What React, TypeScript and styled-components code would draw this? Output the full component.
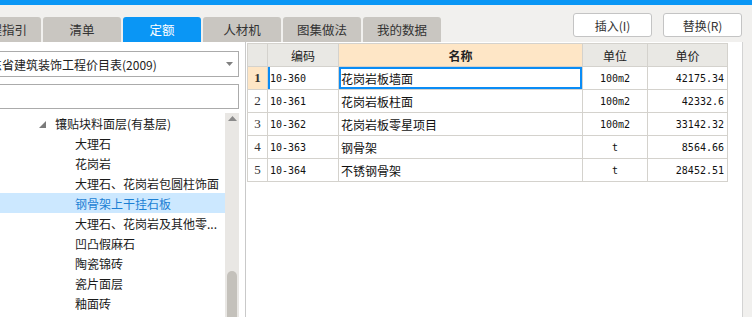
import React from "react";
import styled, { createGlobalStyle, css } from "styled-components";

const GlobalStyle = createGlobalStyle`
  html, body {
    margin: 0;
    padding: 0;
    background: #f1f0ee;
    font-family: "Noto Sans CJK SC", "Noto Sans", sans-serif;
    font-size: 12px;
    color: #222;
  }
  * { box-sizing: border-box; }
`;

const tabs = ["工程指引", "清单", "定额", "人材机", "图集做法", "我的数据"];

const treeItems: { label: string; level: number; open?: boolean; active?: boolean }[] = [
  { label: "镶贴块料面层(有基层)", level: 1, open: true },
  { label: "大理石", level: 2 },
  { label: "花岗岩", level: 2 },
  { label: "大理石、花岗岩包圆柱饰面", level: 2 },
  { label: "钢骨架上干挂石板", level: 2, active: true },
  { label: "大理石、花岗岩及其他零...", level: 2 },
  { label: "凹凸假麻石", level: 2 },
  { label: "陶瓷锦砖", level: 2 },
  { label: "瓷片面层", level: 2 },
  { label: "釉面砖", level: 2 },
];

const rows = [
  { code: "10-360", name: "花岗岩板墙面", unit: "100m2", price: "42175.34" },
  { code: "10-361", name: "花岗岩板柱面", unit: "100m2", price: "42332.6" },
  { code: "10-362", name: "花岗岩板零星项目", unit: "100m2", price: "33142.32" },
  { code: "10-363", name: "钢骨架", unit: "t", price: "8564.66" },
  { code: "10-364", name: "不锈钢骨架", unit: "t", price: "28452.51" },
];

export default function App() {
  return (
    <Page>
      <GlobalStyle />
      <TopStrip />
      <Header>
        <TabBar>
          {tabs.map((t) => (
            <Tab key={t} $active={t === "定额"}>
              {t}
            </Tab>
          ))}
        </TabBar>
        <Actions>
          <ActionButton>插入(I)</ActionButton>
          <ActionButton>替换(R)</ActionButton>
        </Actions>
      </Header>
      <Body>
        <LeftPanel>
          <Select>
            <span>广东省建筑装饰工程价目表(2009)</span>
            <svg width="7" height="4" viewBox="0 0 7 4">
              <path d="M0 0 H7 L3.5 4 Z" fill="#808080" />
            </svg>
          </Select>
          <SearchBox />
          <TreeArea>
            <TreeList>
              {treeItems.map((item) => (
                <TreeRow key={item.label} $level={item.level} $active={item.active}>
                  {item.open && (
                    <Toggle width="7" height="7" viewBox="0 0 7 7">
                      <path d="M7 0 V7 H0 Z" fill="#7b7b7b" />
                    </Toggle>
                  )}
                  {item.label}
                </TreeRow>
              ))}
            </TreeList>
            <ScrollTrack>
              <svg width="9" height="5" viewBox="0 0 9 5">
                <path d="M0 5 L4.5 0 L9 5 Z" fill="#8a8a8a" />
              </svg>
              <ScrollThumb />
            </ScrollTrack>
          </TreeArea>
        </LeftPanel>
        <RightPanel>
          <Grid>
            <colgroup>
              <col style={{ width: 20 }} />
              <col style={{ width: 71 }} />
              <col style={{ width: 244 }} />
              <col style={{ width: 65 }} />
              <col style={{ width: 80 }} />
            </colgroup>
            <thead>
              <tr>
                <HeadCell />
                <HeadCell>编码</HeadCell>
                <HeadCell $focus>名称</HeadCell>
                <HeadCell>单位</HeadCell>
                <HeadCell>单价</HeadCell>
              </tr>
            </thead>
            <tbody>
              {rows.map((r, i) => (
                <tr key={r.code}>
                  <RowNum $current={i === 0}>{i + 1}</RowNum>
                  <Cell $mono $marker={i === 0}>{r.code}</Cell>
                  <Cell $selected={i === 0}>{r.name}</Cell>
                  <Cell $mono $align="center">{r.unit}</Cell>
                  <Cell $mono $align="right">{r.price}</Cell>
                </tr>
              ))}
            </tbody>
          </Grid>
        </RightPanel>
      </Body>
    </Page>
  );
}

const Page = styled.div`
  width: 752px;
  height: 317px;
  overflow: hidden;
  display: flex;
  flex-direction: column;
`;

const TopStrip = styled.div`
  height: 5px;
  background: #0a96f5;
`;

const Header = styled.div`
  height: 37px;
  display: flex;
  justify-content: space-between;
`;

const TabBar = styled.div`
  display: flex;
  align-items: flex-end;
  gap: 2px;
  margin-left: -37px;
`;

const Tab = styled.div<{ $active?: boolean }>`
  width: 78px;
  height: 25px;
  border-radius: 3px 3px 0 0;
  background: #c9c6c1;
  color: #333;
  font-size: 12.5px;
  display: flex;
  align-items: center;
  justify-content: center;
  ${(p) =>
    p.$active &&
    css`
      background: #0a96f5;
      color: #fff;
    `}
`;

const Actions = styled.div`
  display: flex;
  gap: 11px;
  padding: 8px 10px 0 0;
`;

const ActionButton = styled.button`
  width: 79px;
  height: 24px;
  background: #fff;
  border: 1px solid #c4c4c4;
  border-radius: 3px;
  font-family: inherit;
  font-size: 12px;
  color: #333;
  padding: 0;
`;

const Body = styled.div`
  flex: 1;
  display: flex;
  min-height: 0;
`;

const LeftPanel = styled.div`
  width: 246px;
  background: #fff;
  border-right: 1px solid #c9c9c9;
  display: flex;
  flex-direction: column;
  padding: 9px 6px 0 0;
  overflow: hidden;
`;

const Select = styled.div`
  height: 26px;
  margin-left: -12px;
  border: 1px solid #ababab;
  display: flex;
  align-items: center;
  justify-content: space-between;
  padding: 0 5px 0 0;
  font-size: 12px;
  color: #222;
  white-space: nowrap;
  overflow: hidden;
  span {
    margin-left: -11px;
  }
`;

const SearchBox = styled.div`
  height: 25px;
  margin: 7px 0 0 -12px;
  border: 1px solid #ababab;
`;

const TreeArea = styled.div`
  flex: 1;
  display: flex;
  margin-top: 4px;
  min-height: 0;
`;

const TreeList = styled.div`
  flex: 1;
  display: flex;
  flex-direction: column;
`;

const TreeRow = styled.div<{ $level: number; $active?: boolean }>`
  height: 20px;
  flex: none;
  display: flex;
  align-items: center;
  padding-left: ${(p) => (p.$level === 1 ? 55 : 75)}px;
  position: relative;
  white-space: nowrap;
  color: ${(p) => (p.$active ? "#1b7fd4" : "#1a1a1a")};
  background: ${(p) => (p.$active ? "#cce8ff" : "transparent")};
`;

const Toggle = styled.svg`
  position: absolute;
  left: 39px;
  top: 8px;
`;

const ScrollTrack = styled.div`
  width: 14px;
  background: #e9e7e4;
  display: flex;
  flex-direction: column;
  align-items: center;
  padding-top: 3px;
`;

const ScrollThumb = styled.div`
  width: 10px;
  flex: 1;
  margin-top: 150px;
  background: #c4c1bb;
  border-radius: 5px 5px 0 0;
`;

const RightPanel = styled.div`
  flex: 1;
  background: #fff;
  border-right: 1px solid #d3d3d3;
  margin-right: 9px;
  padding: 1px 0 0 1px;
`;

const Grid = styled.table`
  border-collapse: collapse;
  table-layout: fixed;
  width: 481px;
  td, th {
    height: 23px;
    border: 1px solid #d4d2cd;
    padding: 0;
  }
`;

const HeadCell = styled.th<{ $focus?: boolean }>`
  background: ${(p) => (p.$focus ? "#fee6c6" : "#e9e8e4")};
  font-weight: ${(p) => (p.$focus ? 700 : 400)};
  font-size: 12px;
  color: #222;
  text-align: center;
`;

const RowNum = styled.td<{ $current?: boolean }>`
  text-align: center;
  font-family: "Liberation Serif", serif;
  font-size: 13px;
  color: #333;
  font-weight: ${(p) => (p.$current ? 700 : 400)};
  background: ${(p) => (p.$current ? "#fee6c6" : "#fff")};
`;

const Cell = styled.td<{
  $mono?: boolean;
  $align?: "left" | "center" | "right";
  $selected?: boolean;
  $marker?: boolean;
}>`
  text-align: ${(p) => p.$align || "left"};
  font-size: ${(p) => (p.$mono ? "10px" : "12px")};
  font-family: ${(p) =>
    p.$mono ? `"DejaVu Sans Mono", monospace` : `"Noto Sans CJK SC", sans-serif`};
  color: #111;
  padding: ${(p) => (p.$align === "right" ? "0 3px 0 2px" : "0 2px")} !important;
  white-space: nowrap;
  overflow: hidden;
  ${(p) =>
    p.$marker &&
    css`
      box-shadow: inset 2px 0 0 #0a8cf5;
    `}
  ${(p) =>
    p.$selected &&
    css`
      box-shadow: inset 0 0 0 2px #0a8cf5;
    `}
`;
